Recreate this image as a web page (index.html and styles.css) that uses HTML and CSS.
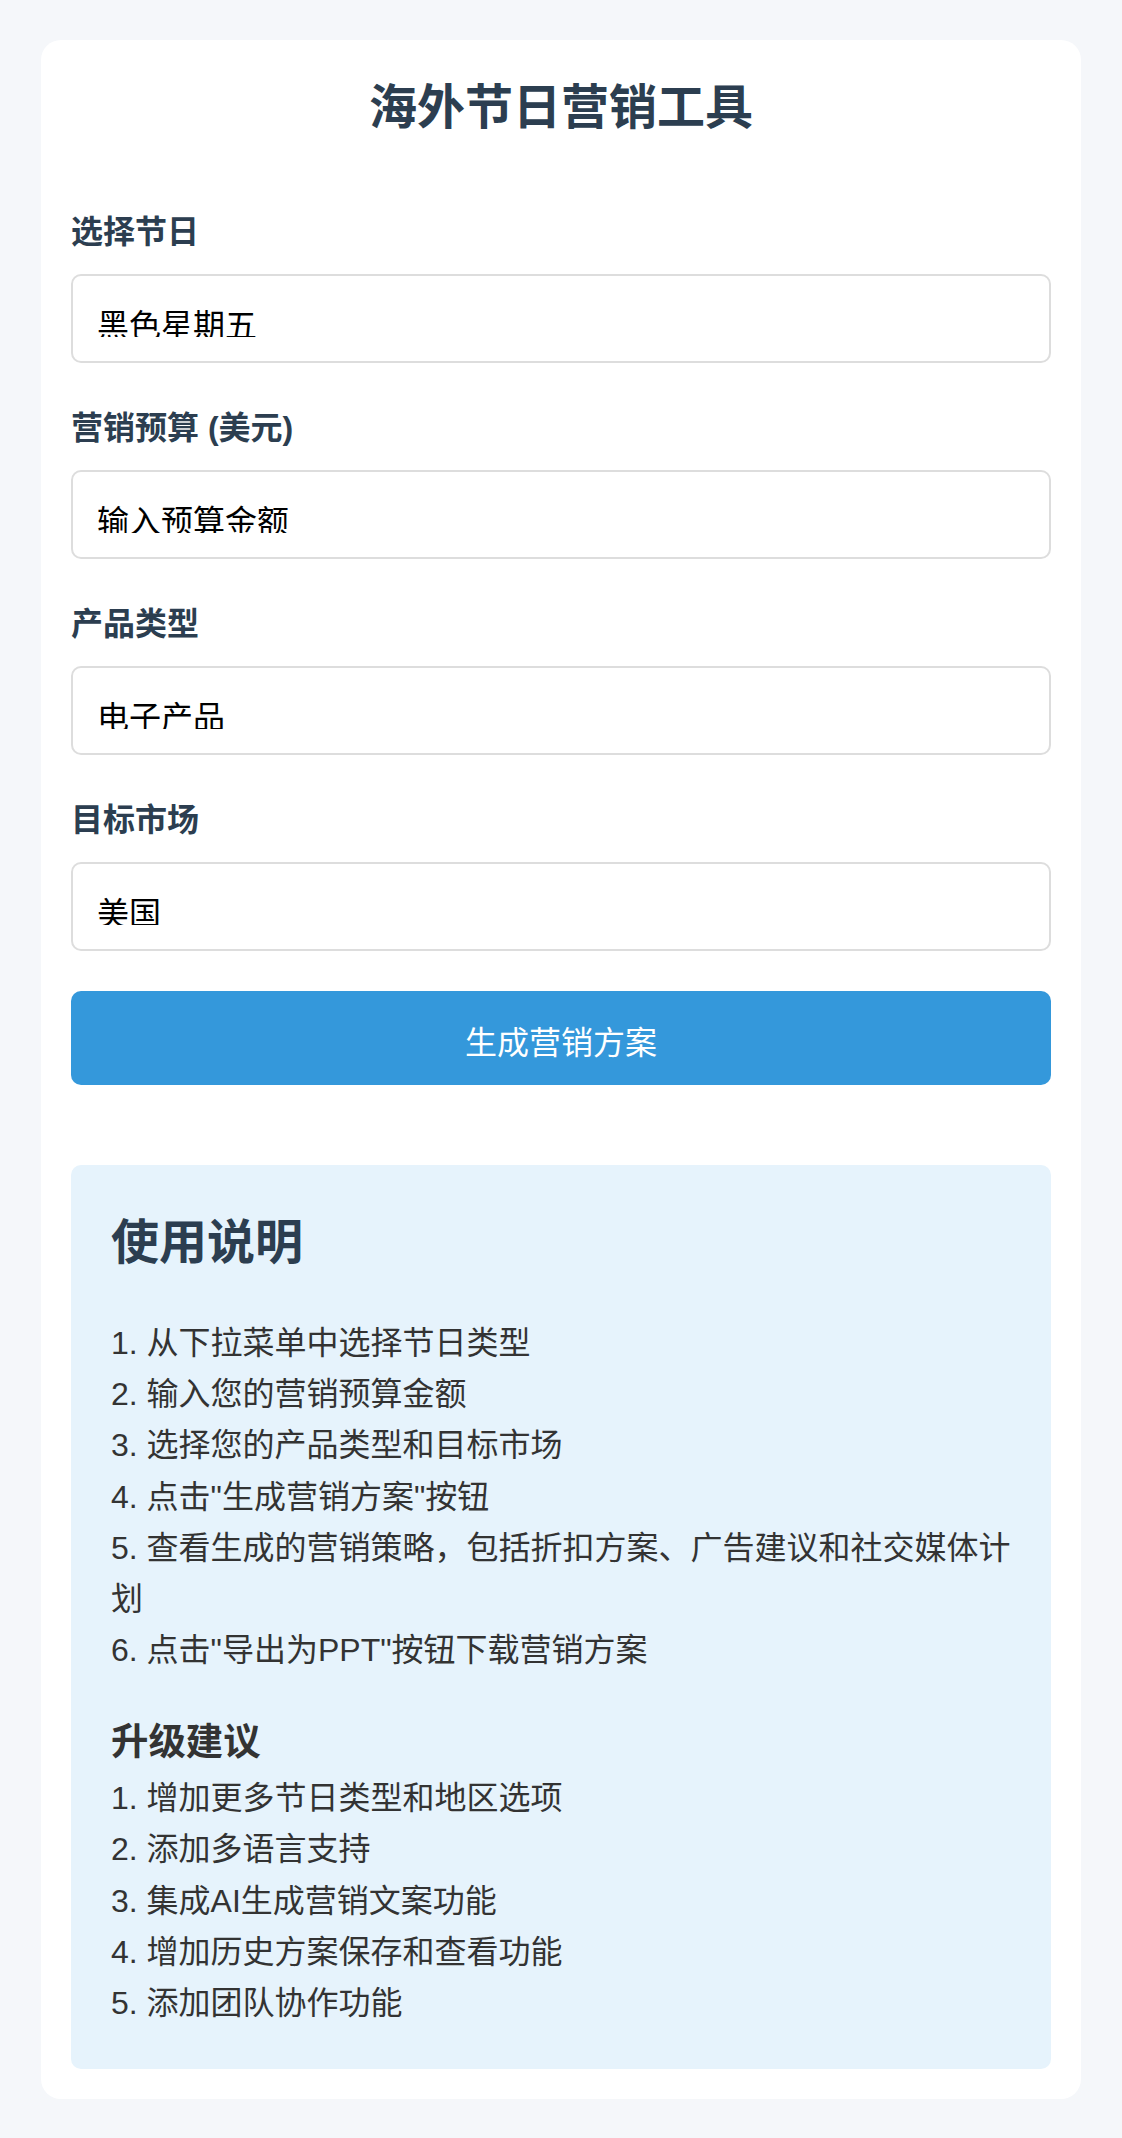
FILE: index.html
```html
<!DOCTYPE html>
<html lang="zh-CN">
<head>
    <meta charset="UTF-8">
    <title>海外节日营销工具</title>
    <link rel="stylesheet" href="styles.css">
</head>
<body>
    <div class="container">
        <h1>海外节日营销工具</h1>

        <form id="marketingForm">
            <div class="form-group">
                <label for="holiday">选择节日</label>
                <div class="field" id="holiday"><div class="field-text">黑色星期五</div></div>
            </div>
            <div class="form-group">
                <label for="budget">营销预算 (美元)</label>
                <div class="field" id="budget"><div class="field-text">输入预算金额</div></div>
            </div>
            <div class="form-group">
                <label for="product">产品类型</label>
                <div class="field" id="product"><div class="field-text">电子产品</div></div>
            </div>
            <div class="form-group">
                <label for="market">目标市场</label>
                <div class="field" id="market"><div class="field-text">美国</div></div>
            </div>
            <button type="submit" class="generate-btn">生成营销方案</button>
        </form>

        <div class="instructions">
            <h2>使用说明</h2>
            <p class="steps">
                1. 从下拉菜单中选择节日类型<br>
                2. 输入您的营销预算金额<br>
                3. 选择您的产品类型和目标市场<br>
                4. 点击"生成营销方案"按钮<br>
                5. 查看生成的营销策略，包括折扣方案、广告建议和社交媒体计划<br>
                6. 点击"导出为PPT"按钮下载营销方案
            </p>
            <h3>升级建议</h3>
            <p class="steps upgrade">
                1. 增加更多节日类型和地区选项<br>
                2. 添加多语言支持<br>
                3. 集成AI生成营销文案功能<br>
                4. 增加历史方案保存和查看功能<br>
                5. 添加团队协作功能
            </p>
        </div>
    </div>
</body>
</html>
```

FILE: styles.css
```css
body {
    margin: 0;
    padding: 40px 0 38px;
    background: #f5f7fa;
    color: #333;
    font-family: "Liberation Sans", "Noto Sans CJK SC", sans-serif;
    font-size: 32px;
    line-height: 1.6;
}
.container {
    max-width: 1040px;
    margin: 0 auto;
    padding: 30px;
    box-sizing: border-box;
    background: #fff;
    border-radius: 20px;
}
h1 {
    margin: 0 0 60px;
    text-align: center;
    font-size: 48px;
    color: #2c3e50;
}
.form-group {
    margin-bottom: 40px;
}
label {
    display: block;
    margin-bottom: 16px;
    font-weight: bold;
    color: #2c3e50;
}
.field {
    padding: 24px;
    border: 2px solid #ddd;
    border-radius: 10px;
    background: #fff;
    color: #000;
}
.field-text {
    height: 36.8px;
    overflow: hidden;
    line-height: 52.6px;
}
.generate-btn {
    display: block;
    width: 100%;
    padding: 29px 24px 19px;
    border: none;
    border-radius: 10px;
    background: #3498db;
    color: #fff;
    font-family: inherit;
    font-size: 32px;
    line-height: 46.4px;
    cursor: pointer;
}
.instructions {
    margin-top: 80px;
    padding: 40px;
    background: #e6f3fc;
    border-radius: 10px;
}
h2 {
    margin: 0 0 36px;
    font-size: 48px;
    color: #2c3e50;
}
.steps {
    margin: 0;
}
h3 {
    margin: 37px 0 0;
    font-size: 37.44px;
    color: #333;
}
```
